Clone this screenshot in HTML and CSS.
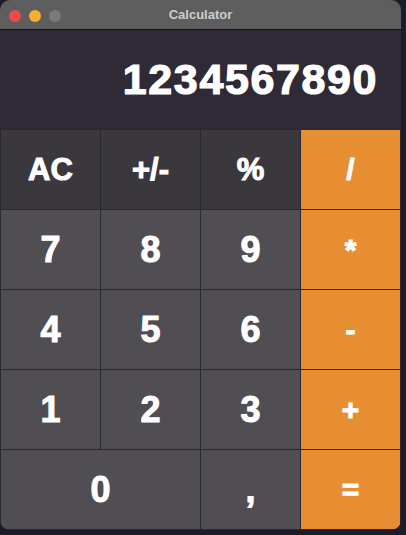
FILE: index.html
```html
<!DOCTYPE html>
<html>
<head>
<meta charset="utf-8">
<link rel="stylesheet" href="styles.css">
</head>
<body>
<div class="window">
  <div class="titlebar">
    <div class="lights">
      <span class="light red"></span>
      <span class="light yellow"></span>
      <span class="light gray"></span>
    </div>
    <div class="title">Calculator</div>
  </div>
  <div class="keys">
    <div class="display">1234567890</div>
    <div class="key fn">AC</div>
    <div class="key fn">+/-</div>
    <div class="key fn">%</div>
    <div class="key op">/</div>
    <div class="key">7</div>
    <div class="key">8</div>
    <div class="key">9</div>
    <div class="key op">*</div>
    <div class="key">4</div>
    <div class="key">5</div>
    <div class="key">6</div>
    <div class="key op">-</div>
    <div class="key">1</div>
    <div class="key">2</div>
    <div class="key">3</div>
    <div class="key op">+</div>
    <div class="key zero">0</div>
    <div class="key">,</div>
    <div class="key op">=</div>
  </div>
</div>
</body>
</html>
```
FILE: styles.css
```css
html, body {
  margin: 0;
  padding: 0;
  background: #1c1d29;
  width: 406px;
  height: 535px;
  overflow: hidden;
}
.window {
  width: 401px;
  height: 530px;
  border-radius: 10px;
  overflow: hidden;
  background: #2a292d;
  display: flex;
  flex-direction: column;
  font-family: "Liberation Sans", Arial, sans-serif;
}
.titlebar {
  height: 29px;
  flex: none;
  background: #5e5e5e;
  border-bottom: 1px solid #141318;
  position: relative;
  display: flex;
  align-items: center;
  justify-content: center;
}
.lights {
  position: absolute;
  left: 9px;
  top: 10px;
  display: flex;
  gap: 8px;
}
.light {
  width: 12px;
  height: 12px;
  border-radius: 50%;
}
.red { background: #ed4b4b; }
.yellow { background: #f7b02e; }
.gray { background: #7a7a7a; }
.title {
  color: #cdcdcd;
  font-weight: bold;
  font-size: 13px;
}
.keys {
  flex: 1;
  display: grid;
  grid-template-columns: repeat(4, 99px);
  grid-template-rows: 99px repeat(5, 79px);
  gap: 1px;
  padding: 0 1px 1px 1px;
  background: #2a292d;
}
.display {
  grid-column: 1 / 5;
  margin: 0 -1px;
  background: #2f2a36;
  color: #ffffff;
  font-weight: bold;
  font-size: 43px;
  letter-spacing: 1.6px;
  -webkit-text-stroke: 1.2px #ffffff;
  display: flex;
  align-items: center;
  justify-content: flex-end;
  padding-right: 23px;
}
.key {
  background: #504d53;
  color: #ffffff;
  font-weight: bold;
  font-size: 36px;
  -webkit-text-stroke: 1px #ffffff;
  display: flex;
  align-items: center;
  justify-content: center;
}
.key.fn {
  background: #3a383c;
  font-size: 31px;
}
.key.op {
  background: #e78e33;
  font-size: 30px;
}
.key.zero {
  grid-column: span 2;
}
```
